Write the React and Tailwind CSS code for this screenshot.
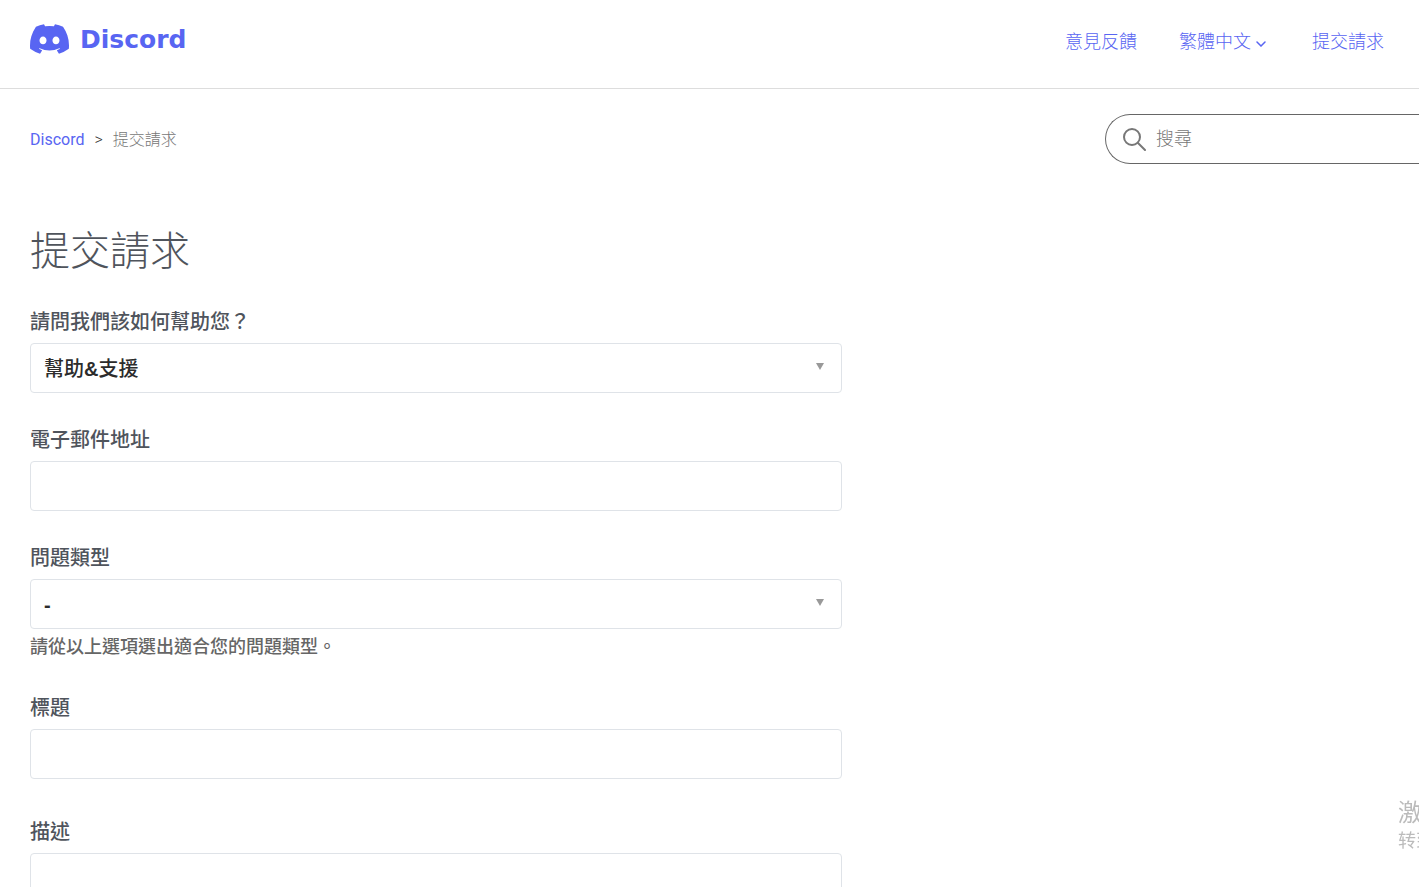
import React from "react";

const LOGO =
  "M107.7,8.07A105.15,105.15,0,0,0,81.47,0a72.06,72.06,0,0,0-3.36,6.83A97.68,97.68,0,0,0,49,6.83,72.37,72.37,0,0,0,45.64,0,105.89,105.89,0,0,0,19.39,8.09C2.79,32.65-1.71,56.6.54,80.21h0A105.73,105.73,0,0,0,32.71,96.36,77.7,77.7,0,0,0,39.6,85.25a68.42,68.42,0,0,1-10.85-5.18c.91-.66,1.8-1.34,2.66-2a75.57,75.57,0,0,0,64.32,0c.87.71,1.76,1.39,2.66,2a68.68,68.68,0,0,1-10.87,5.19,77,77,0,0,0,6.89,11.1A105.25,105.25,0,0,0,126.6,80.22h0C129.24,52.84,122.09,29.11,107.7,8.07ZM42.45,65.69C36.18,65.69,31,60,31,53s5-12.74,11.43-12.74S54,46,53.89,53,48.84,65.69,42.45,65.69Zm42.24,0C78.41,65.69,73.25,60,73.25,53s5-12.74,11.44-12.74S96.23,46,96.12,53,91.08,65.69,84.69,65.69Z";

const control =
  "block w-full rounded border border-[#dfe3e8] bg-white px-[13px] text-xl text-[#2c2c2c] outline-none focus:border-[#5865f2]";

function Header() {
  return (
    <header className="flex h-[89px] items-start justify-between border-b border-[#ddd] pl-[30px] pr-[35px]">
      <a href="#home" className="mt-6 flex items-start gap-[11px] text-[#5865f2]">
        <svg viewBox="0 0 127.14 96.36" className="h-[30px] w-[39px]" fill="currentColor" aria-hidden="true">
          <path d={LOGO} />
        </svg>
        <span className="font-['DejaVu_Sans',sans-serif] text-[25px] leading-8 font-bold">Discord</span>
      </a>
      <nav className="mt-7 flex items-center text-lg leading-7 font-light text-[#5865f2]">
        <a href="#feedback" className="mr-[42px]">意見反饋</a>
        <button type="button" className="mr-[46px] flex items-center gap-[5px] font-light">
          繁體中文
          <svg viewBox="0 0 10 6" className="mt-1 h-1.5 w-2.5" fill="none" stroke="currentColor" strokeWidth="1.5" strokeLinecap="round" aria-hidden="true">
            <path d="M1 1l4 4 4-4" />
          </svg>
        </button>
        <a href="#request">提交請求</a>
      </nav>
    </header>
  );
}

function SubNav() {
  return (
    <div className="mt-[25px] flex items-center justify-between pl-[30px]">
      <ol className="flex items-center pt-0.5 font-['Roboto','Noto_Sans_CJK_TC',sans-serif] text-base leading-6 font-light">
        <li>
          <a href="#home" className="font-normal text-[#5865f2]">Discord</a>
        </li>
        <li className="mx-2.5 text-[#333]" aria-hidden="true">&gt;</li>
        <li className="text-[#777]">提交請求</li>
      </ol>
      <form role="search" className="flex h-[50px] w-[314px] items-center gap-2.5 rounded-l-full border border-r-0 border-[#666] pl-[17px]">
        <svg viewBox="0 0 23 23" className="h-[23px] w-[23px] shrink-0" fill="none" stroke="#777" strokeWidth="2" strokeLinecap="round" aria-hidden="true">
          <circle cx="9" cy="9" r="8" />
          <path d="M15 15l7 7" />
        </svg>
        <input type="search" aria-label="搜尋" placeholder="搜尋" className="min-w-0 flex-1 bg-transparent text-lg font-light outline-none placeholder:text-[#777]" />
      </form>
    </div>
  );
}

function Field({ id, label, hint, children }) {
  return (
    <div>
      <label htmlFor={id} className="mb-2 block text-xl leading-[26px] font-medium text-[#4f545c]">
        {label}
      </label>
      {children}
      {hint && <p className="mt-1 text-lg leading-7 font-medium text-[#666]">{hint}</p>}
    </div>
  );
}

function Select({ id, option }) {
  return (
    <div className="relative">
      <select id={id} className={`${control} h-[50px] appearance-none pt-0.5 font-['Liberation_Sans','Noto_Sans_CJK_TC_Medium','Noto_Sans_CJK_TC',sans-serif] font-bold`}>
        <option>{option}</option>
      </select>
      <svg viewBox="0 0 8 7" className="pointer-events-none absolute top-5 right-[18px] h-[7px] w-2" fill="#999" aria-hidden="true">
        <path d="M0 0h8L4 7z" />
      </svg>
    </div>
  );
}

export default function App() {
  return (
    <div className="min-h-screen bg-white font-['Liberation_Sans','Noto_Sans_CJK_TC',sans-serif]">
      <Header />
      <SubNav />
      <main className="px-[30px] pb-16">
        <h1 className="mt-[57px] text-[40px] leading-[60px] font-light text-[#4f545c]">提交請求</h1>
        <form className="mt-7 flex max-w-[812px] flex-col gap-[34px]">
          <Field id="topic" label="請問我們該如何幫助您？">
            <Select id="topic" option="幫助&支援" />
          </Field>
          <Field id="email" label="電子郵件地址">
            <input id="email" type="email" className={`${control} h-[50px]`} />
          </Field>
          <Field id="kind" label="問題類型" hint="請從以上選項選出適合您的問題類型。">
            <Select id="kind" option="-" />
          </Field>
          <Field id="subject" label="標題">
            <input id="subject" type="text" className={`${control} h-[50px]`} />
          </Field>
          <div className="pt-1.5">
            <Field id="description" label="描述">
              <textarea id="description" rows="6" className={`${control} py-3`} />
            </Field>
          </div>
        </form>
      </main>
      <aside className="pointer-events-none fixed right-0 bottom-9 w-[21px] overflow-hidden font-['Noto_Sans_CJK_SC',sans-serif] whitespace-nowrap text-[#bbb]">
        <p className="text-2xl leading-8">激</p>
        <p className="text-lg leading-6">转到</p>
      </aside>
    </div>
  );
}
